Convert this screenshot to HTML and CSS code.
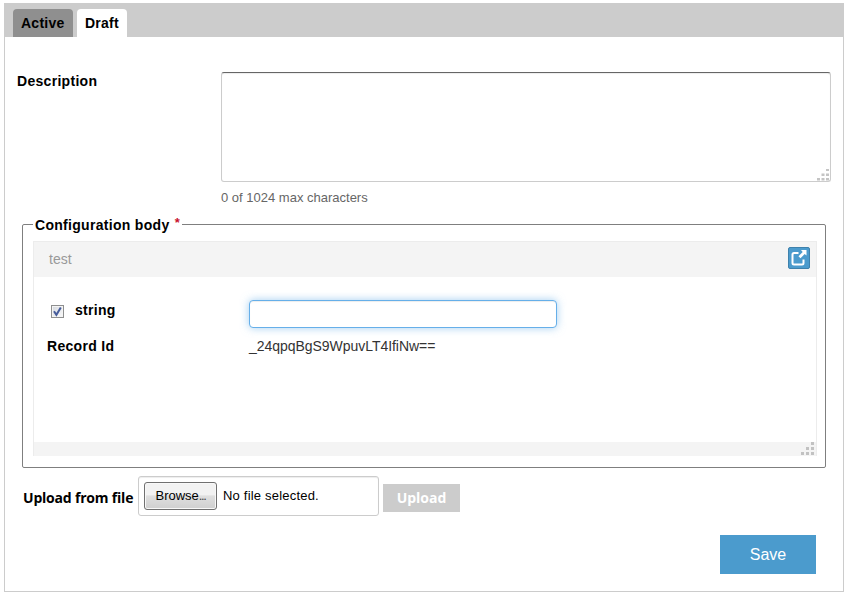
FILE: index.html
```html
<!DOCTYPE html>
<html lang="en">
<head>
<meta charset="utf-8">
<title>Configuration</title>
<link rel="stylesheet" href="styles.css">
</head>
<body>
<main class="panel">
  <nav class="tabs">
    <a class="tab">Active</a>
    <a class="tab tab-current">Draft</a>
  </nav>
  <form class="form">
    <div class="description">
      <label class="label" for="description">Description</label>
      <div>
        <div class="area-wrap">
          <textarea class="area" id="description"></textarea>
          <svg class="grip" width="14" height="14" viewBox="0 0 14 14" fill="#c4c4c4"><path d="M9 1h3v2h-3zM4.500 5.500h3v2.500h-3zM9 5.500h3v2.500h-3zM0 10h3v2.500H0zM4.500 10h3v2.500h-3zM9 10h3v2.500h-3z"/></svg>
        </div>
        <div class="hint">0 of 1024 max characters</div>
      </div>
    </div>
    <fieldset class="config">
      <legend class="label legend">Configuration body <span class="required">*</span></legend>
      <section class="editor">
        <header class="editor-head">
          <span class="editor-title">test</span>
          <button type="button" class="expand" aria-label="Expand">
            <svg width="16" height="16" viewBox="0 0 16 16"><path d="M7.5 3H3Q1.5 3 1.5 4.500V13Q1.500 14.500 3 14.500H11Q12.500 14.500 12.500 13V9.500" fill="none" stroke="#fff" stroke-width="2"/><path d="M10 0H15.500V5.500L13.700 4L9.500 8.200L7.500 6.200L11.700 2Z" fill="#fff"/></svg>
          </button>
        </header>
        <div class="editor-body">
          <div class="row row-input">
            <span class="check">
              <svg width="11" height="11" viewBox="0 0 11 11"><path d="M2 5.200L4.400 8.800L8.800 1.500" fill="none" stroke="#465c9b" stroke-width="2"/></svg>
            </span>
            <span class="label name">string</span>
            <input class="text-input" type="text" aria-label="string">
          </div>
          <div class="row row-record">
            <span class="label">Record Id</span>
            <span class="value">_24qpqBgS9WpuvLT4IfiNw==</span>
          </div>
        </div>
        <footer class="editor-foot">
          <svg width="15" height="14" viewBox="0 0 15 14" fill="#c2c2c2"><path d="M10 0h3v3h-3zM5 5h3v3H5zM10 5h3v3h-3zM0 10h3v3H0zM5 10h3v3H5zM10 10h3v3h-3z"/></svg>
        </footer>
      </section>
    </fieldset>
    <div class="upload">
      <span class="upload-label">Upload from file</span>
      <div class="file">
        <button type="button" class="browse">Browse<span class="dots">...</span></button>
        <span>No file selected.</span>
      </div>
      <button type="button" class="upload-button">Upload</button>
    </div>
    <div class="actions"><button type="button" class="save">Save</button></div>
  </form>
</main>
</body>
</html>
```
FILE: styles.css
```css
* { box-sizing: border-box; }
body {
  margin: 0;
  padding: 3px 3px 6px 4px;
  background: #fff;
  color: #000;
  font: 14px/20px "Liberation Sans", Arial, sans-serif;
}
button { margin: 0; padding: 0; border: 0; font: inherit; }
.panel { height: 589px; border: 1px solid #ccc; border-top: 0; }
.tabs {
  display: flex;
  gap: 4px;
  height: 34px;
  padding: 6px 8px 0;
  background: #ccc;
}
.tab {
  padding: 4px 8px 0;
  width: 60px;
  border-radius: 4px 4px 0 0;
  background: #8f8f8f;
  font-weight: bold;
  letter-spacing: .25px;
  white-space: nowrap;
}
.tab-current { width: 50px; background: #fff; }
.form { padding: 35px 12px 0; }
.label { font-weight: bold; letter-spacing: .3px; white-space: nowrap; }
.description { display: grid; grid-template-columns: 204px 610px; height: 152px; }
.description > .label { margin-top: -1px; }
.area-wrap { position: relative; height: 110px; }
.area {
  display: block;
  width: 610px;
  height: 110px;
  border: 1px solid #ccc;
  border-top-color: #666;
  border-radius: 3px;
  box-shadow: inset 0 1px 1px rgba(0, 0, 0, .075);
  resize: none;
  outline: 0;
}
.grip { position: absolute; right: 0; bottom: 0; }
.hint {
  margin-top: 6px;
  color: #666;
  font-size: 13px;
}
.config {
  width: 803px;
  height: 253px;
  margin: -9px 0 0 5px;
  padding: 8px 8px 0 10px;
  border: 1px solid #7f7f7f;
  border-radius: 2px;
}
.legend { height: 18px; padding: 0 2px; line-height: 20px; }
.required { margin-left: 1px; color: #c8102e; font-size: 13px; line-height: 1; vertical-align: 3px; }
.editor { width: 784px; height: 215px; border: 1px solid #ececec; border-bottom: 0; }
.editor-head {
  display: flex;
  align-items: center;
  justify-content: space-between;
  height: 35px;
  padding: 0 6px 0 15px;
  background: #f4f4f4;
  color: #999;
}
.editor-title { margin-bottom: 2px; }
.expand {
  display: grid;
  place-items: center;
  width: 22px;
  height: 22px;
  margin-bottom: 3px;
  border: 1px solid #3e81ac;
  border-radius: 2px;
  background: #4b9bcd;
}
.editor-body { height: 165px; padding-top: 23px; }
.row { display: flex; }
.row-input { height: 36px; padding-left: 17px; }
.check {
  width: 13px;
  height: 13px;
  margin: 5px 11px 0 0;
  border: 1px solid #8e8f8f;
  background: linear-gradient(135deg, #d5d9df, #fafafa);
  box-shadow: inset 0 0 0 1px #f4f4f4;
}
.check svg { display: block; }
.name { width: 174px; }
.text-input {
  width: 308px;
  height: 28px;
  border: 1px solid #66afe9;
  border-radius: 4px;
  outline: 0;
  box-shadow: inset 0 1px 1px rgba(0, 0, 0, .075), 0 0 8px rgba(102, 175, 233, .6);
}
.row-record { padding-left: 13px; }
.row-record .label { width: 202px; }
.value { color: #333; letter-spacing: -.04px; }
.editor-foot { display: flex; justify-content: flex-end; height: 14px; background: #f4f4f4; }
.upload { display: flex; margin: 8px 0 0 6px; height: 40px; }
.upload-label {
  width: 115px;
  padding-top: 12px;
  font: bold 14px/20px "Open Sans", sans-serif;
  letter-spacing: -.2px;
  white-space: nowrap;
}
.file {
  display: flex;
  gap: 6px;
  width: 241px;
  height: 40px;
  padding: 5px;
  border: 1px solid #ccc;
  border-radius: 3px;
  box-shadow: inset 0 1px 1px rgba(0, 0, 0, .075);
  font-size: 13px;
  letter-spacing: .2px;
  line-height: 27px;
}
.browse {
  width: 73px;
  height: 28px;
  border: 1px solid #707070;
  border-radius: 3px;
  background: linear-gradient(#f2f2f2 0 45%, #dfdfdf 50%, #cfcfcf);
  box-shadow: inset 0 0 0 1px #f8f8f8;
  line-height: 24px;
}
.dots { color: #444; letter-spacing: -1.4px; }
.upload-button {
  width: 77px;
  height: 28px;
  margin: 8px 0 0 4px;
  background: #ccc;
  color: #fff;
  font: bold 14px/28px "Open Sans", sans-serif;
}
.actions { display: flex; justify-content: flex-end; margin: 19px 15px 0 0; }
.save { width: 96px; height: 39px; background: #4b9bcd; color: #fff; font-size: 16px; }
```
